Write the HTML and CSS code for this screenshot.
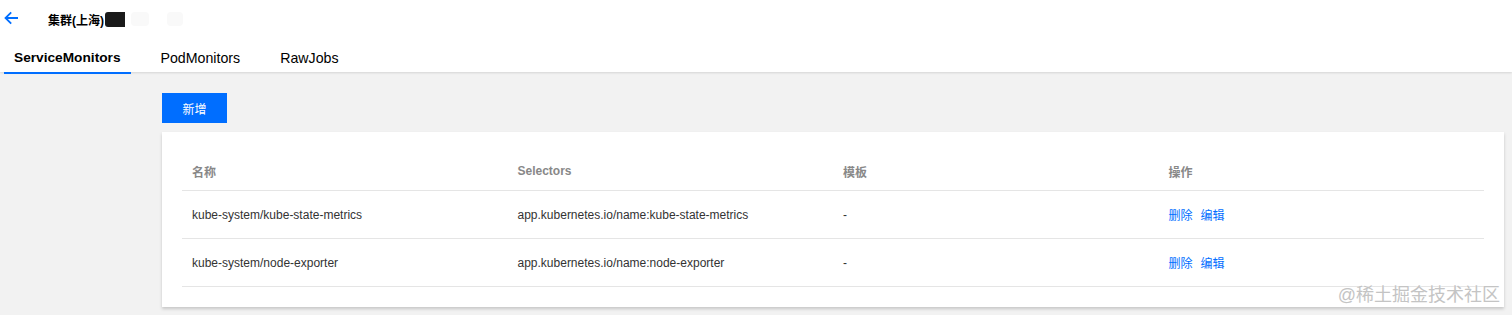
FILE: index.html
```html
<!DOCTYPE html>
<html lang="zh-CN">
<head>
    <meta charset="UTF-8">
    <title>ServiceMonitors</title>
    <link rel="stylesheet" href="styles.css">
</head>
<body>
    <!-- Header -->
    <div class="header">
        <div class="title-row">
            <svg class="back" width="15" height="14" viewBox="0 0 15 14">
                <path d="M14 7H2M7.2 1.3L1.5 7L7.2 12.7" fill="none" stroke="#006eff" stroke-width="1.8"/>
            </svg>
            <span class="title">集群(上海)</span>
            <span class="redact"></span>
            <span class="blur blur-1"></span>
            <span class="blur blur-2"></span>
        </div>
        <div class="tabs">
            <div class="tab active">ServiceMonitors</div>
            <div class="tab">PodMonitors</div>
            <div class="tab">RawJobs</div>
        </div>
    </div>

    <!-- Content -->
    <div class="content">
        <button class="btn-primary">新增</button>
        <div class="card">
            <table class="table">
                <thead>
                    <tr>
                        <th>名称</th>
                        <th>Selectors</th>
                        <th>模板</th>
                        <th>操作</th>
                    </tr>
                </thead>
                <tbody>
                    <tr>
                        <td>kube-system/kube-state-metrics</td>
                        <td>app.kubernetes.io/name:kube-state-metrics</td>
                        <td>-</td>
                        <td><a class="link">删除</a><a class="link">编辑</a></td>
                    </tr>
                    <tr>
                        <td>kube-system/node-exporter</td>
                        <td>app.kubernetes.io/name:node-exporter</td>
                        <td>-</td>
                        <td><a class="link">删除</a><a class="link">编辑</a></td>
                    </tr>
                </tbody>
            </table>
        </div>
    </div>

    <div class="watermark">@稀土掘金技术社区</div>
</body>
</html>
```

FILE: styles.css
```css
body {
    margin: 0;
    background: #f2f2f2;
    font-family: "Liberation Sans", "Noto Sans CJK SC", sans-serif;
    font-size: 12px;
    color: #333;
    position: relative;
    height: 315px;
    overflow: hidden;
}
.header {
    background: #fff;
    height: 72px;
    box-shadow: 0 1px 2px rgba(0, 0, 0, 0.12);
    position: relative;
}
.title-row {
    display: flex;
    align-items: center;
    height: 38px;
    padding-left: 4px;
}
.back {
    margin-top: -2px;
}
.title {
    margin-left: 29px;
    font-weight: bold;
    font-size: 12px;
    color: #000;
}
.redact {
    width: 20px;
    height: 15px;
    background: #1a1a1a;
    border-radius: 3px 0 0 3px;
    margin-left: 1px;
}
.blur {
    height: 14px;
    background: #f9f9f9;
    border-radius: 4px;
}
.blur-1 {
    width: 18px;
    margin-left: 6px;
}
.blur-2 {
    width: 16px;
    margin-left: 18px;
}
.tabs {
    display: flex;
    gap: 20px;
    padding-left: 4px;
    padding-top: 5px;
    height: 29px;
}
.tab {
    padding: 0 10px;
    font-size: 14.2px;
    color: #000;
    line-height: 30px;
    height: 31px;
    border-bottom: 2px solid transparent;
    box-sizing: border-box;
}
.tab.active {
    font-size: 13.7px;
    font-weight: bold;
    border-bottom-color: #006eff;
}
.content {
    padding: 21px 8px 0 162px;
}
.btn-primary {
    display: block;
    width: 65px;
    height: 30px;
    border: none;
    background: #006eff;
    color: #fff;
    font-family: inherit;
    font-size: 12px;
    padding: 0;
}
.card {
    margin-top: 9px;
    background: #fff;
    padding: 20px;
    box-shadow: 0 2px 3px rgba(0, 0, 0, 0.18);
}
.table {
    width: 100%;
    border-collapse: collapse;
    table-layout: fixed;
}
.table th {
    text-align: left;
    font-weight: bold;
    color: #888;
    height: 38px;
    padding: 0 10px;
    border-bottom: 1px solid #e5e5e5;
}
.table td {
    height: 47px;
    padding: 0 10px;
    border-bottom: 1px solid #e5e5e5;
}
.link {
    color: #006eff;
    margin-right: 8px;
}
.watermark {
    position: absolute;
    right: 12px;
    top: 280px;
    font-size: 18px;
    color: #c4c4c4;
    text-shadow: 0 0 2px #fff;
}
```
